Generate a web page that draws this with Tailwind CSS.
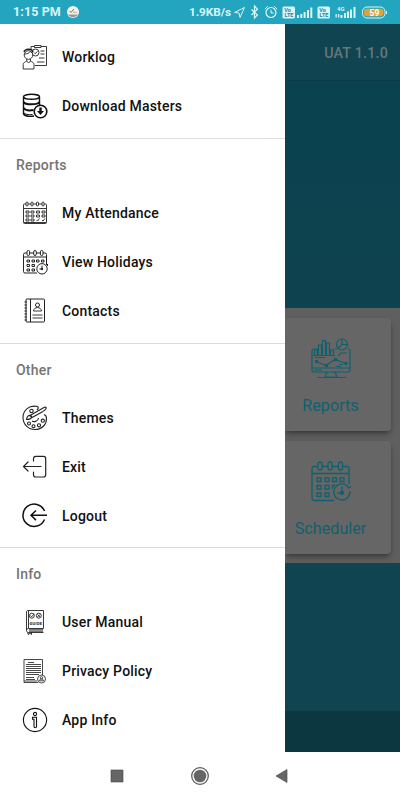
<!DOCTYPE html>
<html lang="en">
<head>
  <meta charset="UTF-8" />
  <meta name="viewport" content="width=device-width, initial-scale=1.0" />
  <title>Navigation Drawer</title>
  <script src="https://cdn.jsdelivr.net/npm/@tailwindcss/browser@4"></script>
</head>
<body class="w-[400px] h-[800px] overflow-hidden bg-white flex flex-col font-['Roboto',sans-serif]">
  <!-- Status bar -->
  <header class="h-6 shrink-0 bg-[#23a5bf] text-[#d9f6fa] flex items-center px-[13px]">
    <span class="text-[12.5px] font-bold tracking-[0.1px] w-[54px] pt-px whitespace-nowrap">1:15 PM</span>
    <svg class="w-3 h-3" viewBox="0 0 12 12"><circle cx="6" cy="6" r="6" fill="#f3f3ee"/><path d="M1 8.500h10A6 6 0 0 1 1 8.500z" fill="#8d9aa0"/><path d="M2.500 5l1.500 1.500L7 3" fill="none" stroke="#8c6b35"/><path d="M6 6.300h4" stroke="#d78378" stroke-width=".8"/></svg>
    <span class="ml-auto pt-px pr-px text-[11.7px] font-bold whitespace-nowrap">1.9KB/s</span>
    <svg class="w-[155px] h-6 shrink-0" viewBox="232 0 155 24" fill="none" stroke="#d9f6fa">
      <path d="M234.500 12.500L244.500 7.500l-4.500 10-1-4.500z" stroke-width="1"/>
      <path d="M251.500 9.500l6 5.500-3 3V6l3 3.300-6 5.700" stroke-width="1.200"/>
      <circle cx="271" cy="12.500" r="5" stroke-width="1.200"/><path d="M271 9.800v3.200h2.800M264.800 9.200l3-3M277.200 9.200l-3-3"/>
      <g fill="#d9f6fa" stroke="none">
        <rect x="282.500" y="6.500" width="12.500" height="12" rx="1.500"/><rect x="317.500" y="6.500" width="12.500" height="12" rx="1.500"/>
        <path d="M297 15h2v3h-2zM300.300 14h2v4h-2zM303.600 12h2v6h-2zM307 10h2v8h-2zM310.300 7.500h2V18h-2z"/>
        <path d="M340.500 15h2v3h-2zM344 13h2v5h-2zM347 11.500h2V18h-2zM350 9.500h2V18h-2zM353.500 7h2v11h-2zM335.500 14h1.300v3.500h-1.300zM338 14h1.300v3.500H338z"/>
      </g>
      <g fill="#23869b" stroke="none" font-family="Roboto, sans-serif" font-weight="700" font-size="5.500" text-anchor="middle">
        <text x="287.500" y="12">Vo</text><text x="289" y="17.300">LTE</text><text x="322.500" y="12">Vo</text><text x="324" y="17.300">LTE</text>
      </g>
      <text x="337" y="11" fill="#d9f6fa" stroke="none" font-family="Roboto, sans-serif" font-weight="700" font-size="6">4G</text>
      <rect x="362.500" y="7" width="22.500" height="11" rx="4.500"/><path d="M376 8.800h4.500a3 3 0 0 1 3 3v1.400a3 3 0 0 1-3 3H367a3 3 0 0 1-3-3v-1.400a3 3 0 0 1 3-3z" fill="#dba33a" stroke="none"/>
      <path d="M386.500 11v3"/>
      <text x="369.500" y="15.700" fill="#fff" stroke="none" font-family="Roboto, sans-serif" font-weight="700" font-size="8.500">59</text>
    </svg>
  </header>

  <div class="h-[728px] shrink-0 flex">
    <!-- Drawer -->
    <nav class="w-[285px] shrink-0 bg-white pt-2 text-[14px] font-medium text-[#111] tracking-[0.2px]">
      <a class="h-[49px] flex items-center pl-[22px]">
        <svg class="w-[26px] h-[26px] mr-[14px]" viewBox="0 0 26 26" fill="none" stroke="#222" stroke-width=".9">
          <path d="M9 5V2.500h3M19 2.500h5.500V21.500H13M12.500 1.500h6.500v2h-6.500z"/><circle cx="13.500" cy="8.500" r="3.500"/><path d="M12 8.500l1.300 1.300 2.200-2.500M18.500 7h4M18.500 10h4M17 14h5.500M15 18h7.500" />
          <circle cx="6.500" cy="11" r="4.300" fill="#fff"/><path d="M2.300 10c3 0 5-1 6-2.500l2.500 2M1.200 25v-4.500c0-2 2-2.500 3.500-3.500v-2M8.500 15v2c1.500 1 3.500 1.500 3.500 3.500V25H1.200M4.700 17l2 2 1.800-2"/><path d="M2 8c1-3.500 8-4 9 0" stroke-width="1.500"/>
        </svg><span class="pt-[2px]">Worklog</span></a>
      <a class="h-[49px] flex items-center pl-[22px]">
        <svg class="w-[26px] h-[26px] mr-[14px]" viewBox="0 0 26 26" fill="none" stroke="#111" stroke-width="1.400">
          <path d="M1.500 4v17c1.500 2 6 2.800 10.500 2M17.500 4v8"/><ellipse cx="9.500" cy="3.800" rx="8" ry="2.500"/>
          <path d="M1.500 9c1.500 3 14 3.200 16 0M1.500 15c1.500 2.200 6 2.700 10 2" stroke-width="2"/><path d="M1.500 19.500c1.500 2 5 2.600 9 2" stroke-width="1"/>
          <circle cx="18.500" cy="18.500" r="6.300" fill="#fff" stroke-width="1.600"/><path d="M17.300 14.500h2.400v3.500h2.300l-3.500 4-3.500-4h2.300z" fill="#111" stroke="none"/>
        </svg><span class="pt-[2px]">Download Masters</span></a>

      <h2 class="mt-2 h-[50px] border-t border-[#dcdcdc] pl-4 pt-[3px] flex items-center text-[#747474]">Reports</h2>
      <a class="h-[49px] flex items-center pl-[22px]">
        <svg class="w-[26px] h-[26px] mr-[14px]" viewBox="0 0 26 26" fill="none" stroke="#222" stroke-width=".9">
          <rect x="1.500" y="4" width="23" height="19.500" rx="1"/><path d="M1.500 8.500h23M2 22.500h22" />
          <g fill="#fff"><rect x="4" y="2" width="2" height="4" rx="1"/><rect x="9" y="2" width="2" height="4" rx="1"/><rect x="14.500" y="2" width="2" height="4" rx="1"/><rect x="20" y="2" width="2" height="4" rx="1"/></g>
          <path d="M4 11h3v2H4zM9 11h3v2H9zM14.500 11h3v2h-3zM20 11h3v2h-3zM4 15h3v2H4zM9 15h3v2H9zM14.500 15h3v2h-3zM20 15h3v2h-3zM4 19h3v2H4zM9 19h3v2H9zM14.500 20l1 1 2-2.500M20 20l1 1 2-2.500"/>
        </svg><span class="pt-[2px]">My Attendance</span></a>
      <a class="h-[49px] flex items-center pl-[22px]">
        <svg class="w-[26px] h-[26px] mr-[14px]" viewBox="0 0 26 26" fill="none" stroke="#222" stroke-width="1">
          <path d="M15 24H3a1.500 1.500 0 0 1-1.500-1.500v-17A1.500 1.500 0 0 1 3 4h20a1.500 1.500 0 0 1 1.500 1.500V16M1.500 8h23"/>
          <g fill="#fff"><rect x="5" y="1.500" width="2.600" height="5" rx="1.300"/><rect x="11.700" y="1.500" width="2.600" height="5" rx="1.300"/><rect x="18.400" y="1.500" width="2.600" height="5" rx="1.300"/></g>
          <path d="M5 11h2.500v2H5zM10 11h2.500v2H10zM14.500 11H17v2h-2.500zM19.500 11H22v2h-2.500zM5 15.500h2.500v2H5zM10 15.500h2.500v2H10zM5 20h2.500v2H5zM10 20h2.500v2H10z"/>
          <circle cx="20" cy="19.800" r="5.200" fill="#fff"/><path d="M20 16.500v3.500M17.500 20H21M25.500 17v-2"/><circle cx="20" cy="20" r=".8" fill="#222"/>
        </svg><span class="pt-[2px]">View Holidays</span></a>
      <a class="h-[49px] flex items-center pl-[22px]">
        <svg class="w-[26px] h-[26px] mr-[14px]" viewBox="0 0 26 26" fill="none" stroke="#222" stroke-width="1">
          <rect x="4" y="1" width="18.500" height="23" rx="1"/><path d="M8.500 1v23"/><path d="M2.500 4H5M2.500 7H5M2.500 10H5M2.500 13H5M2.500 16H5M2.500 19H5M2.500 22H5" stroke-width="1.200"/>
          <circle cx="15.500" cy="7" r="2"/><path d="M11.500 13c0-4.500 8-4.500 8 0zM10.500 17h10M10.500 20h10" stroke-width=".9"/>
        </svg><span class="pt-[2px]">Contacts</span></a>

      <h2 class="mt-2 h-[50px] border-t border-[#dcdcdc] pl-4 pt-[3px] flex items-center text-[#747474]">Other</h2>
      <a class="h-[49px] flex items-center pl-[22px]">
        <svg class="w-[26px] h-[26px] mr-[14px]" viewBox="0 0 26 26" fill="none" stroke="#222" stroke-width="1.100">
          <path d="M15.500 1.500C7-.5 1 5.500 1 12.500c0 7 5.500 12 12 12 7 0 11.500-5 11.500-11 0-2-1-3.500-2.500-4M15.500 1.500c1.500 1 .5 2.500-.5 3.500"/>
          <path d="M8 10.500L22 2.500c1.500-.8 2.800-.2 2 1.200-.8 1.500-2 2-3.500 3L10 12.500zM4.500 14.500c.5-3 2-4.500 4-4 2 1 1.500 4-4 4z" fill="#fff"/>
          <path d="M10 16c1.500 1 6 1 6.500-3"/><circle cx="9.500" cy="6" r="1.700"/><circle cx="7" cy="18.500" r="1.500"/><circle cx="11.500" cy="21.300" r="1.500"/><circle cx="17" cy="20.300" r="1.600"/><circle cx="20.800" cy="15.700" r="1.600"/>
        </svg><span class="pt-[2px]">Themes</span></a>
      <a class="h-[49px] flex items-center pl-[22px]">
        <svg class="w-[26px] h-[26px] mr-[14px]" viewBox="0 0 26 26" fill="none" stroke="#222" stroke-width="1.200" stroke-linecap="round">
          <path d="M11.500 7V4.500c0-1.500.7-2.200 2.200-2.200h8c1.400 0 2 .8 2 2.200v16.300c0 1.400-.6 2.200-2 2.200h-8c-1.500 0-2.200-.8-2.200-2.200V18M19 12.500H2M6 8l-4.500 4.500L6 17"/>
        </svg><span class="pt-[2px]">Exit</span></a>
      <a class="h-[49px] flex items-center pl-[22px]">
        <svg class="w-[26px] h-[26px] mr-[14px]" viewBox="0 0 26 26" fill="none" stroke="#111" stroke-width="1.500">
          <path d="M22.500 8A11.200 11.200 0 1 0 22.500 16.500M25 12.300H9.500M14 7.500l-5 4.800 5 4.800"/>
        </svg><span class="pt-[2px]">Logout</span></a>

      <h2 class="mt-[7px] h-[50px] border-t border-[#dcdcdc] pl-4 pt-[3px] flex items-center text-[#747474]">Info</h2>
      <a class="h-[49px] flex items-center pl-[22px]">
        <svg class="w-[26px] h-[26px] mr-[14px]" viewBox="0 0 26 26" fill="none" stroke="#222" stroke-width=".9">
          <path d="M4.500 21V3c0-1 .6-1.500 1.500-1.500h15.500v18H6.500c-2.700.2-2.700 3.800 0 4h15M7 20.800h14M7 22.200h14M6.500 2v17"/>
          <circle cx="9.800" cy="6.700" r="2.500"/><circle cx="16.800" cy="6.700" r="2.500"/><path d="M8.500 6.500l1.200 1.300 2.500-3M15.500 5.400l2.600 2.600M18.100 5.400L15.500 8M6 23v2.500l2-1.200 1.500 1.200V23"/>
          <text x="7.500" y="15.500" fill="#222" stroke="none" font-family="Roboto, sans-serif" font-size="4.200" font-weight="700">GUIDE</text>
        </svg><span class="pt-[2px]">User Manual</span></a>
      <a class="h-[49px] flex items-center pl-[22px]">
        <svg class="w-[26px] h-[26px] mr-[14px]" viewBox="0 0 26 26" fill="none" stroke="#333" stroke-width=".9">
          <path d="M16 24.500H2v-23h18.500V17M2 23h13"/><path d="M6 4.500h6M4 6.500h15M4 8.500h15M4 10.500h15M4 12.500h15M4 14.500h15M4 16.500h13M4 19.500h8M4 21.500h9"/>
          <circle cx="19.500" cy="21" r="4" fill="#fff"/><circle cx="19.500" cy="19.800" r="1.200"/><path d="M17.500 22.800c0-2.500 4-2.500 4 0z"/>
        </svg><span class="pt-[2px]">Privacy Policy</span></a>
      <a class="h-[49px] flex items-center pl-[22px]">
        <svg class="w-[26px] h-[26px] mr-[14px]" viewBox="0 0 26 26" fill="none" stroke="#111" stroke-width="1.100">
          <circle cx="13" cy="13" r="11.600"/><circle cx="13" cy="7" r="1.600"/><path d="M10.500 10.300h4v9.200c0 1.600-2.500 1.600-2.500 0v-7.200h-1.500z"/>
        </svg><span class="pt-[2px]">App Info</span></a>
    </nav>

    <!-- Dimmed page behind the drawer -->
    <main class="w-[115px] flex flex-col overflow-hidden bg-[#0f4450]">
      <div class="h-[57px] shrink-0 border-b border-[#0b3c48] flex items-center justify-end pr-[12px] pt-1 text-[14.3px] font-medium tracking-[0.2px] text-[#66777b]">UAT 1.1.0</div>
      <div class="h-[227px] shrink-0 bg-linear-to-b from-[#0a424f] to-[#0f424f]"></div>
      <div class="h-[255px] shrink-0 bg-[#5f5f5f] pt-[10px] pr-[9px] flex flex-col gap-[10px]">
        <section class="h-[113px] rounded-r-sm bg-[#666] shadow-md shadow-black/30 flex flex-col items-center pt-[18px]">
          <svg class="w-[42px] h-[44px] -ml-[15px]" viewBox="0 0 42 44" fill="none" stroke="#10616e" stroke-width="1.200">
            <path d="M8 13H4a2 2 0 0 0-2 2v19a2 2 0 0 0 2 2h34a2 2 0 0 0 2-2V15a2 2 0 0 0-2-2M2 32h38M17 36l-2 5h12l-2-5M7 41.500h29M4 34h8M24 13h3"/>
            <path d="M4.500 19v-5h3v5M8.500 19V9h3v10M12.500 19V4.500h3V19M16.500 19V7h3v12M20.500 19v-5h3v5M3 19.500h22M5 21.500h10"/>
            <circle cx="32" cy="8.500" r="5.500"/><path d="M32 3v5.500h5.500M32 8.500L28 12.500M28 20l3-3h6"/>
            <path d="M7 26l9 3.500 9-6L36 27.500M26 30.500h5M29 28.500h4"/>
            <g fill="#10616e"><circle cx="6.500" cy="25.500" r="1.200"/><circle cx="16.500" cy="29.500" r="1.200"/><circle cx="25.500" cy="23.500" r="1.200"/><circle cx="36" cy="27.500" r="1.200"/></g>
          </svg>
          <span class="mt-[14px] -ml-[15px] text-[16.2px] leading-6 text-[#10616e]">Reports</span>
        </section>
        <section class="h-[113px] rounded-r-sm bg-[#666] shadow-md shadow-black/30 flex flex-col items-center pt-[18px]">
          <svg class="w-[42px] h-[44px] -ml-[15px]" viewBox="0 0 42 44" fill="none" stroke="#10616e" stroke-width="1.300">
            <path d="M24 41.500H4a2 2 0 0 1-2-2v-30a2 2 0 0 1 2-2h3M12 7.500h6M22 7.500h6M33 7.500h4a2 2 0 0 1 2 2V25M2 14.500h37"/>
            <rect x="8" y="3" width="4" height="8" rx="2"/><rect x="18" y="3" width="4" height="8" rx="2"/><rect x="28.500" y="3" width="4" height="8" rx="2"/>
            <path d="M7 19h4v3.500H7zM15 19h4v3.500h-4zM22.500 19h4v3.500h-4zM30 19h4v3.500h-4zM7 26.500h4V30H7zM15 26.500h4V30h-4zM25 26.500h-2.500V30M7 34h4v3.500H7zM15 34h4v3.500h-4z"/>
            <path d="M38.500 28.500a8 8 0 1 0 1.300 3.500M37 26.500l1.500 2.500 2.500-1.500M32 27.500V34M27.500 34H33"/><circle cx="32" cy="34" r="1.500" fill="#10616e"/>
          </svg>
          <span class="mt-[14px] -ml-[15px] text-[16.2px] leading-6 text-[#10616e]">Scheduler</span>
        </section>
      </div>
      <div class="h-[148px] shrink-0"></div>
      <div class="h-[41px] shrink-0 bg-[#0d3740]"></div>
    </main>
  </div>

  <!-- System navigation -->
  <footer class="h-12 shrink-0 bg-white">
    <svg class="w-[400px] h-12" viewBox="0 0 400 48" fill="#666">
      <rect x="111" y="18" width="12" height="12" stroke="#444" stroke-width=".6"/>
      <circle cx="200" cy="24" r="6.300"/><circle cx="200" cy="24" r="8.300" fill="none" stroke="#555" stroke-width="1.200"/>
      <path d="M276 24l11-6.500v13z" stroke="#444" stroke-width=".6"/>
    </svg>
  </footer>
</body>
</html>
